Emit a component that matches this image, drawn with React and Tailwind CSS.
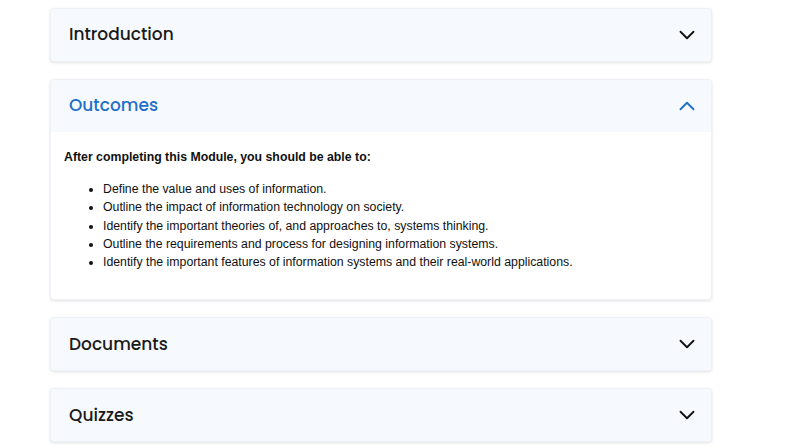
import { ChevronDown, ChevronUp } from 'lucide-react'

const outcomes = [
  'Define the value and uses of information.',
  'Outline the impact of information technology on society.',
  'Identify the important theories of, and approaches to, systems thinking.',
  'Outline the requirements and process for designing information systems.',
  'Identify the important features of information systems and their real-world applications.',
]

function Header({ title, open }) {
  return (
    <div className="flex items-center justify-between h-[52px] pl-[18px] pr-[11px] bg-[#f6f9fd]">
      <h2
        className={'text-[17px] font-medium ' + (open ? 'text-[#1f6fc7]' : 'text-[#1a1a1a]')}
        style={{ fontFamily: 'Poppins, Inter, "Noto Sans", sans-serif' }}
      >
        {title}
      </h2>
      {open ? (
        <ChevronUp className="w-[26px] h-[26px] text-[#1f6fc7]" strokeWidth={1.7} />
      ) : (
        <ChevronDown className="w-[26px] h-[26px] text-[#111]" strokeWidth={1.7} />
      )}
    </div>
  )
}

function Card({ children }) {
  return (
    <section className="rounded-[4px] overflow-hidden bg-white border border-[#eef1f5] shadow-[0_1px_3px_rgba(0,0,0,0.12)]">
      {children}
    </section>
  )
}

export default function App() {
  return (
    <div className="w-[795px] h-[448px] bg-white overflow-hidden">
      <div className="ml-[50px] w-[662px] pt-[8px] flex flex-col gap-[17px]">
        <Card>
          <Header title="Introduction" />
        </Card>

        <Card>
          <Header title="Outcomes" open />
          <div
            className="px-[13px] pt-[16px] pb-[28px] text-[12.3px] text-[#111]"
            style={{ fontFamily: '"Liberation Sans", Arial, sans-serif' }}
          >
            <p className="font-bold leading-[18px]">After completing this Module, you should be able to:</p>
            <ul className="list-disc pl-[39px] mt-[14px] leading-[18.25px]">
              {outcomes.map((o) => (
                <li key={o}>{o}</li>
              ))}
            </ul>
          </div>
        </Card>

        <Card>
          <Header title="Documents" />
        </Card>

        <Card>
          <Header title="Quizzes" />
        </Card>
      </div>
    </div>
  )
}
